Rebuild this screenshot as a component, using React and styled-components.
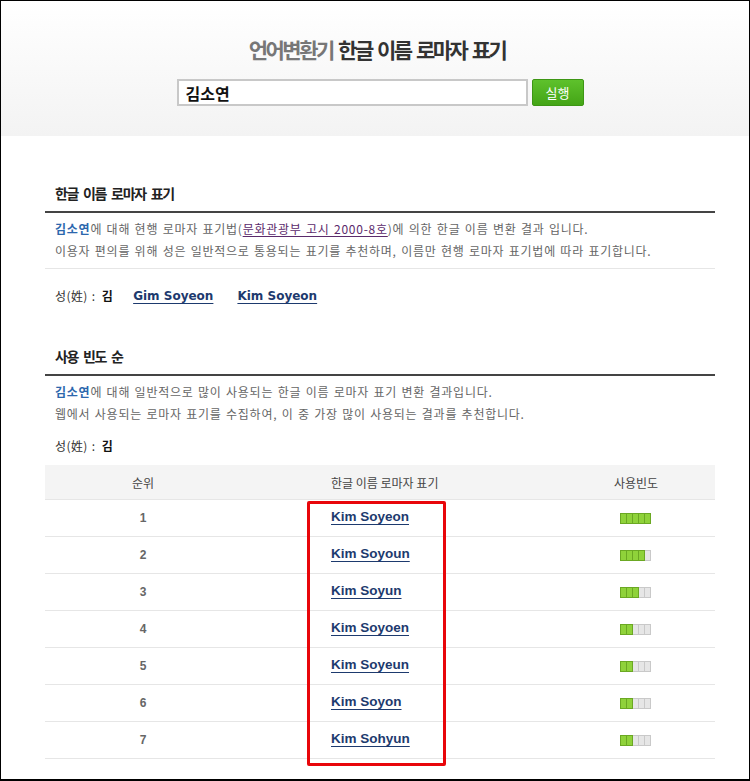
import styled, { createGlobalStyle } from 'styled-components';

const GlobalStyle = createGlobalStyle`
	body {
		margin: 0;
		background: #fff;
		font-family: "Noto Sans CJK KR", "Noto Sans", sans-serif;
	}
`;

const Frame = styled.div`
	position: relative;
	box-sizing: border-box;
	width: 750px;
	height: 781px;
	border: 1px solid #000;
	border-bottom-width: 2px;
	overflow: hidden;
	background: #fff;
`;

const Header = styled.header`
	height: 135px;
	display: flex;
	flex-direction: column;
	align-items: center;
	background: linear-gradient(to bottom, #ffffff 0%, #f3f3f3 100%);
`;

const Title = styled.h1`
	margin: 33px 0 0;
	font-size: 21px;
	line-height: 30px;
	font-weight: 700;
	letter-spacing: -2.5px;
	word-spacing: 3px;
	color: #333;
	padding-left: 4px;
`;

const Dim = styled.span`
	color: #777;
`;

const SearchRow = styled.form`
	display: flex;
	gap: 4px;
	margin-top: 15px;
	padding-left: 10px;
`;

const SearchInput = styled.input`
	box-sizing: border-box;
	width: 351px;
	height: 27px;
	border: 2px solid #c8c8c8;
	padding: 0 7px;
	font-family: "Noto Sans CJK KR", sans-serif;
	font-size: 16px;
	font-weight: 700;
	color: #111;
	background: #fff;
	outline: none;
`;

const RunButton = styled.button`
	box-sizing: border-box;
	width: 52px;
	height: 27px;
	border: 1px solid #3d9614;
	border-radius: 2px;
	background: linear-gradient(to bottom, #5ec12c 0%, #44a516 100%);
	color: #fff;
	font-family: "Noto Sans CJK KR", sans-serif;
	font-size: 13px;
	padding: 0;
`;

const Content = styled.main`
	width: 670px;
	margin-left: 44px;
	padding-top: 47px;
`;

const Section = styled.section`
	margin-top: ${(p) => p.$gap || 0}px;
`;

const SectionTitle = styled.h2`
	margin: 0;
	padding: 0 10px 8px;
	font-size: 14px;
	line-height: 20px;
	font-weight: 700;
	letter-spacing: -1.3px;
	word-spacing: 3px;
	color: #222;
	border-bottom: 2px solid #444;
`;

const Desc = styled.p`
	margin: 5px 0 0;
	padding: 0 10px ${(p) => (p.$ruled ? 6 : 0)}px;
	font-size: 12px;
	line-height: 22px;
	letter-spacing: 0.75px;
	word-spacing: 1px;
	color: #666;
	border-bottom: ${(p) => (p.$ruled ? '1px solid #e6e6e6' : 'none')};
`;

const Name = styled.strong`
	color: #2c67ad;
`;

const LawLink = styled.a`
	color: #5b2a6b;
	text-decoration: underline;
	text-underline-offset: 2px;
`;

const SurnameRow = styled.div`
	display: flex;
	align-items: center;
	margin-top: ${(p) => p.$gap}px;
	padding-left: 10px;
	font-size: 12px;
	line-height: 20px;
	color: #333;
`;

const SurnameLabel = styled.span`
	letter-spacing: 0.4px;
	word-spacing: 1px;
`;

const Surname = styled.b`
	color: #111;
	margin-left: 2px;
`;

const RomanLink = styled.a`
	margin-left: ${(p) => p.$gap}px;
	font-family: "DejaVu Sans", Verdana, sans-serif;
	font-size: 12px;
	font-weight: 700;
	color: #1d3a6e;
	text-decoration: underline;
	text-underline-offset: 3px;
`;

const TableWrap = styled.div`
	position: relative;
	margin-top: 9px;
`;

const Row = styled.div`
	display: grid;
	grid-template-columns: 196px 316px 158px;
	height: ${(p) => (p.$head ? 34 : 36)}px;
	align-items: center;
	background: ${(p) => (p.$head ? '#f4f4f4' : '#fff')};
	border-bottom: 1px solid #e6e6e6;
	font-size: 12px;
	color: #444;
`;

const Cell = styled.div`
	padding-left: ${(p) => (p.$left ? 90 : 0)}px;
	display: flex;
	justify-content: ${(p) => (p.$left ? 'flex-start' : 'center')};
`;

const Rank = styled.span`
	font-family: "Liberation Sans", Arial, sans-serif;
	font-weight: 700;
	font-size: 12px;
	color: #666;
`;

const TableLink = styled.a`
	font-family: "Liberation Sans", Arial, sans-serif;
	font-size: 13.5px;
	line-height: 16px;
	margin-top: -2px;
	font-weight: 700;
	color: #1d3a6e;
	text-decoration: underline;
	text-underline-offset: 3px;
`;

const Meter = styled.div`
	display: flex;
	margin-right: 2px;
`;

const Step = styled.span`
	box-sizing: border-box;
	width: 7px;
	height: 11px;
	margin-left: -1px;
	border: 1px solid ${(p) => (p.$on ? '#6ba823' : '#c9c9c9')};
	background: ${(p) => (p.$on ? '#8fd23a' : '#e6e6e6')};
	position: relative;
	z-index: ${(p) => (p.$on ? 1 : 0)};
	&:first-child {
		margin-left: 0;
	}
`;

const Highlight = styled.div`
	position: absolute;
	left: 262px;
	top: 36px;
	width: 139px;
	height: 265px;
	box-sizing: border-box;
	border: 3px solid #e8060a;
	border-radius: 2px;
	pointer-events: none;
`;

const results = [
	{ name: 'Kim Soyeon', level: 5 },
	{ name: 'Kim Soyoun', level: 4 },
	{ name: 'Kim Soyun', level: 3 },
	{ name: 'Kim Soyoen', level: 2 },
	{ name: 'Kim Soyeun', level: 2 },
	{ name: 'Kim Soyon', level: 2 },
	{ name: 'Kim Sohyun', level: 2 },
];

const FrequencyMeter = ({ level }) => (
	<Meter>
		{[0, 1, 2, 3, 4].map((i) => (
			<Step key={i} $on={i < level} />
		))}
	</Meter>
);

export default function App() {
	return (
		<>
			<GlobalStyle />
			<Frame>
				<Header>
					<Title>
						<Dim>언어변환기</Dim> 한글 이름 로마자 표기
					</Title>
					<SearchRow onSubmit={(e) => e.preventDefault()}>
						<SearchInput defaultValue="김소연" />
						<RunButton type="submit">실행</RunButton>
					</SearchRow>
				</Header>

				<Content>
					<Section>
						<SectionTitle>한글 이름 로마자 표기</SectionTitle>
						<Desc $ruled>
							<Name>김소연</Name>에 대해 현행 로마자 표기법(
							<LawLink href="#">문화관광부 고시 2000-8호</LawLink>)에 의한 한글 이름 변환 결과 입니다.
							<br />
							이용자 편의를 위해 성은 일반적으로 통용되는 표기를 추천하며, 이름만 현행 로마자 표기법에 따라 표기합니다.
						</Desc>
						<SurnameRow $gap={17}>
							<SurnameLabel>
								성(姓) : <Surname>김</Surname>
							</SurnameLabel>
							<RomanLink href="#" $gap={20}>Gim Soyeon</RomanLink>
							<RomanLink href="#" $gap={24}>Kim Soyeon</RomanLink>
						</SurnameRow>
					</Section>

					<Section $gap={40}>
						<SectionTitle>사용 빈도 순</SectionTitle>
						<Desc>
							<Name>김소연</Name>에 대해 일반적으로 많이 사용되는 한글 이름 로마자 표기 변환 결과입니다.
							<br />
							웹에서 사용되는 로마자 표기를 수집하여, 이 중 가장 많이 사용되는 결과를 추천합니다.
						</Desc>
						<SurnameRow $gap={11}>
							<SurnameLabel>
								성(姓) : <Surname>김</Surname>
							</SurnameLabel>
						</SurnameRow>

						<TableWrap>
							<Row $head>
								<Cell>순위</Cell>
								<Cell $left>한글 이름 로마자 표기</Cell>
								<Cell>사용빈도</Cell>
							</Row>
							{results.map((r, i) => (
								<Row key={r.name}>
									<Cell>
										<Rank>{i + 1}</Rank>
									</Cell>
									<Cell $left>
										<TableLink href="#">{r.name}</TableLink>
									</Cell>
									<Cell>
										<FrequencyMeter level={r.level} />
									</Cell>
								</Row>
							))}
							<Highlight />
						</TableWrap>
					</Section>
				</Content>
			</Frame>
		</>
	);
}
